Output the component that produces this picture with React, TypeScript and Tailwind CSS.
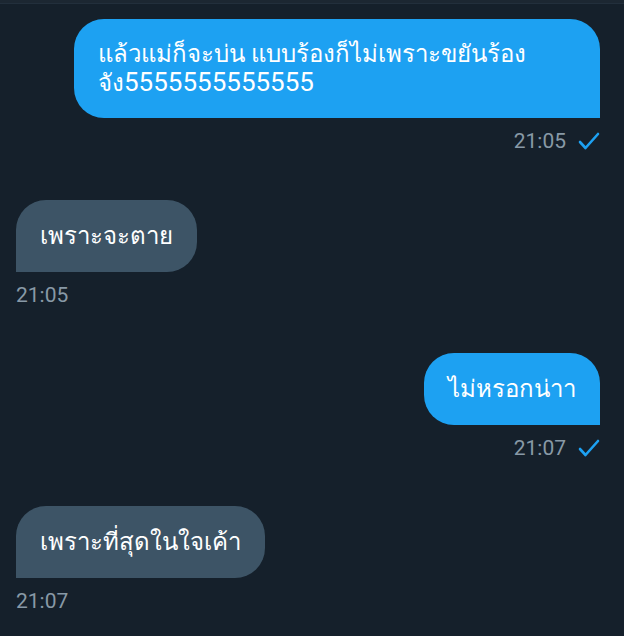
import { Fragment } from "react";

type Msg = { id: number; text: React.ReactNode[]; time: string; mine: boolean; extra?: string };

const MESSAGES: Msg[] = [
  {
    id: 1,
    text: [
      "แล้วแม่ก็จะบ่น แบบร้องก็ไม่เพราะขยันร้อง",
      <>
        จัง<span className="text-[26px]">5555555555555</span>
      </>,
    ],
    time: "21:05",
    mine: true,
    extra: "w-[526px] py-[21px]",
  },
  { id: 2, text: ["เพราะจะตาย"], time: "21:05", mine: false },
  { id: 3, text: ["ไม่หรอกน่าา"], time: "21:07", mine: true },
  { id: 4, text: ["เพราะที่สุดในใจเค้า"], time: "21:07", mine: false },
];

function CheckIcon() {
  return (
    <svg className="h-[20px] w-[22px] text-[#1da1f2]" viewBox="0 0 22 20" fill="none" stroke="currentColor">
      <path d="M2 11l5.5 6L20 3" strokeWidth={2.6} strokeLinecap="round" strokeLinejoin="round" />
    </svg>
  );
}

export default function App() {
  return (
    <div
      className="min-h-[636px] w-[624px] bg-[#15202b] pb-6"
      style={{ fontFamily: "Roboto, 'Noto Sans', 'DejaVu Sans', sans-serif" }}
    >
      <div className="h-[4px] border-b border-[#222f3c] bg-[#1c2732]" />
      <div className="flex flex-col pt-[15px]">
        {MESSAGES.map((m, i) => (
          <Fragment key={m.id}>
            <div
              className={`flex flex-col ${m.mine ? "items-end pr-6" : "items-start pl-4"} ${
                i === 1 ? "mt-[47px]" : i > 1 ? "mt-[46px]" : ""
              }`}
            >
              <div
                className={`rounded-[30px] px-6 text-[24px] leading-[28px] text-white ${m.extra ?? "py-[22px]"} ${
                  m.mine ? "rounded-br-none bg-[#1da1f2]" : "rounded-bl-none bg-[#3d5466]"
                }`}
              >
                {m.text.map((line, j) => (
                  <div key={j}>{line}</div>
                ))}
              </div>
              <div className="mt-[11px] flex h-[24px] items-center gap-3 text-[21px] leading-[24px] text-[#8899a6]">
                <span>{m.time}</span>
                {m.mine && <CheckIcon />}
              </div>
            </div>
          </Fragment>
        ))}
      </div>
    </div>
  );
}
